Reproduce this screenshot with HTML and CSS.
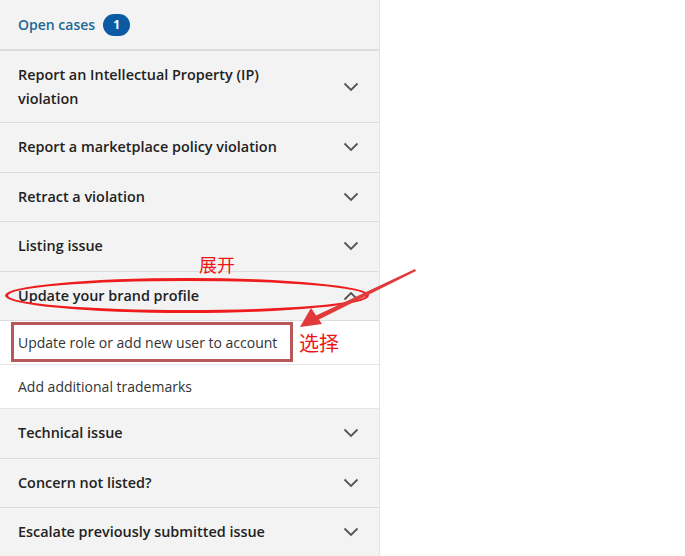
FILE: index.html
```html
<!DOCTYPE html>
<html lang="en">
<head>
  <meta charset="UTF-8">
  <title>Open cases</title>
  <link rel="stylesheet" href="styles.css">
</head>
<body>
  <div class="page">
    <div class="panel">
      <div class="panel-head">
        <span class="head-title">Open cases</span>
        <span class="badge">1</span>
      </div>

      <div class="row tall">
        <span class="row-text">Report an Intellectual Property (IP) violation</span>
        <svg class="chev" viewBox="0 0 16 10"><path d="M1.5 1.5 L8 8 L14.5 1.5"/></svg>
      </div>
      <div class="row">
        <span class="row-text">Report a marketplace policy violation</span>
        <svg class="chev" viewBox="0 0 16 10"><path d="M1.5 1.5 L8 8 L14.5 1.5"/></svg>
      </div>
      <div class="row">
        <span class="row-text">Retract a violation</span>
        <svg class="chev" viewBox="0 0 16 10"><path d="M1.5 1.5 L8 8 L14.5 1.5"/></svg>
      </div>
      <div class="row">
        <span class="row-text">Listing issue</span>
        <svg class="chev" viewBox="0 0 16 10"><path d="M1.5 1.5 L8 8 L14.5 1.5"/></svg>
      </div>
      <div class="row open">
        <span class="row-text">Update your brand profile</span>
        <svg class="chev" viewBox="0 0 16 10"><path d="M1.5 8.5 L8 2 L14.5 8.5"/></svg>
      </div>
      <div class="sub">Update role or add new user to account</div>
      <div class="sub">Add additional trademarks</div>
      <div class="row">
        <span class="row-text">Technical issue</span>
        <svg class="chev" viewBox="0 0 16 10"><path d="M1.5 1.5 L8 8 L14.5 1.5"/></svg>
      </div>
      <div class="row">
        <span class="row-text">Concern not listed?</span>
        <svg class="chev" viewBox="0 0 16 10"><path d="M1.5 1.5 L8 8 L14.5 1.5"/></svg>
      </div>
      <div class="row">
        <span class="row-text">Escalate previously submitted issue</span>
        <svg class="chev" viewBox="0 0 16 10"><path d="M1.5 1.5 L8 8 L14.5 1.5"/></svg>
      </div>
    </div>

    <!-- hand-drawn annotations on top of the screenshot -->
    <div class="note note-open">展开</div>
    <div class="note note-pick">选择</div>
    <div class="ring"></div>
    <div class="pick-box"></div>
    <svg class="arrow" viewBox="0 0 685 556">
      <path class="shaft" d="M415 269 L416 271 L318 320 L315 316 Z"/>
      <path class="head" d="M300 327 L311 308 L322 324 Z"/>
    </svg>
  </div>
</body>
</html>
```

FILE: styles.css
```css
body {
  margin: 0;
  background: #fff;
  font-family: "Open Sans", "Noto Sans CJK SC", sans-serif;
  color: #222;
}
.page {
  position: relative;
  width: 685px;
  height: 556px;
  overflow: hidden;
}
.panel {
  width: 379px;
  border-right: 1px solid #e3e3e3;
  background: #f3f3f3;
}
.panel-head {
  height: 49px;
  display: flex;
  align-items: center;
  gap: 8px;
  padding-left: 18px;
  border-bottom: 2px solid #dcdcdc;
}
.head-title {
  color: #1d6896;
  font-size: 14px;
  font-weight: 600;
}
.badge {
  width: 27px;
  height: 22px;
  border-radius: 11px;
  background: #0b5aa4;
  color: #fff;
  font-size: 12px;
  font-weight: 700;
  display: flex;
  align-items: center;
  justify-content: center;
}
.row {
  display: flex;
  align-items: center;
  justify-content: space-between;
  height: 48.5px;
  padding: 0 18px;
  border-bottom: 1px solid #dcdcdc;
  font-size: 14.4px;
  font-weight: 600;
  line-height: 24px;
}
.row.tall {
  height: 71px;
}
.row-text {
  max-width: 260px;
}
.chev {
  width: 16px;
  height: 10px;
  margin-right: 2px;
  fill: none;
  stroke: #555;
  stroke-width: 1.8;
}
.sub {
  height: 43px;
  display: flex;
  align-items: center;
  padding-left: 18px;
  background: #fff;
  border-bottom: 1px solid #e6e6e6;
  font-size: 14px;
  color: #333;
}
.note {
  position: absolute;
  color: #f01414;
  font-family: "Noto Sans CJK SC", sans-serif;
}
.note-open {
  left: 199px;
  top: 251px;
  font-size: 18px;
}
.note-pick {
  left: 299px;
  top: 328px;
  font-size: 20px;
}
.ring {
  position: absolute;
  left: 5px;
  top: 278px;
  width: 358px;
  height: 29px;
  border: 3px solid #ee1c1c;
  border-radius: 50%;
}
.pick-box {
  position: absolute;
  left: 11px;
  top: 322px;
  width: 276px;
  height: 34px;
  border: 3px solid #b9585b;
}
.arrow {
  position: absolute;
  left: 0;
  top: 0;
  width: 685px;
  height: 556px;
}
.arrow .shaft,
.arrow .head {
  fill: #e03a3a;
}
```
